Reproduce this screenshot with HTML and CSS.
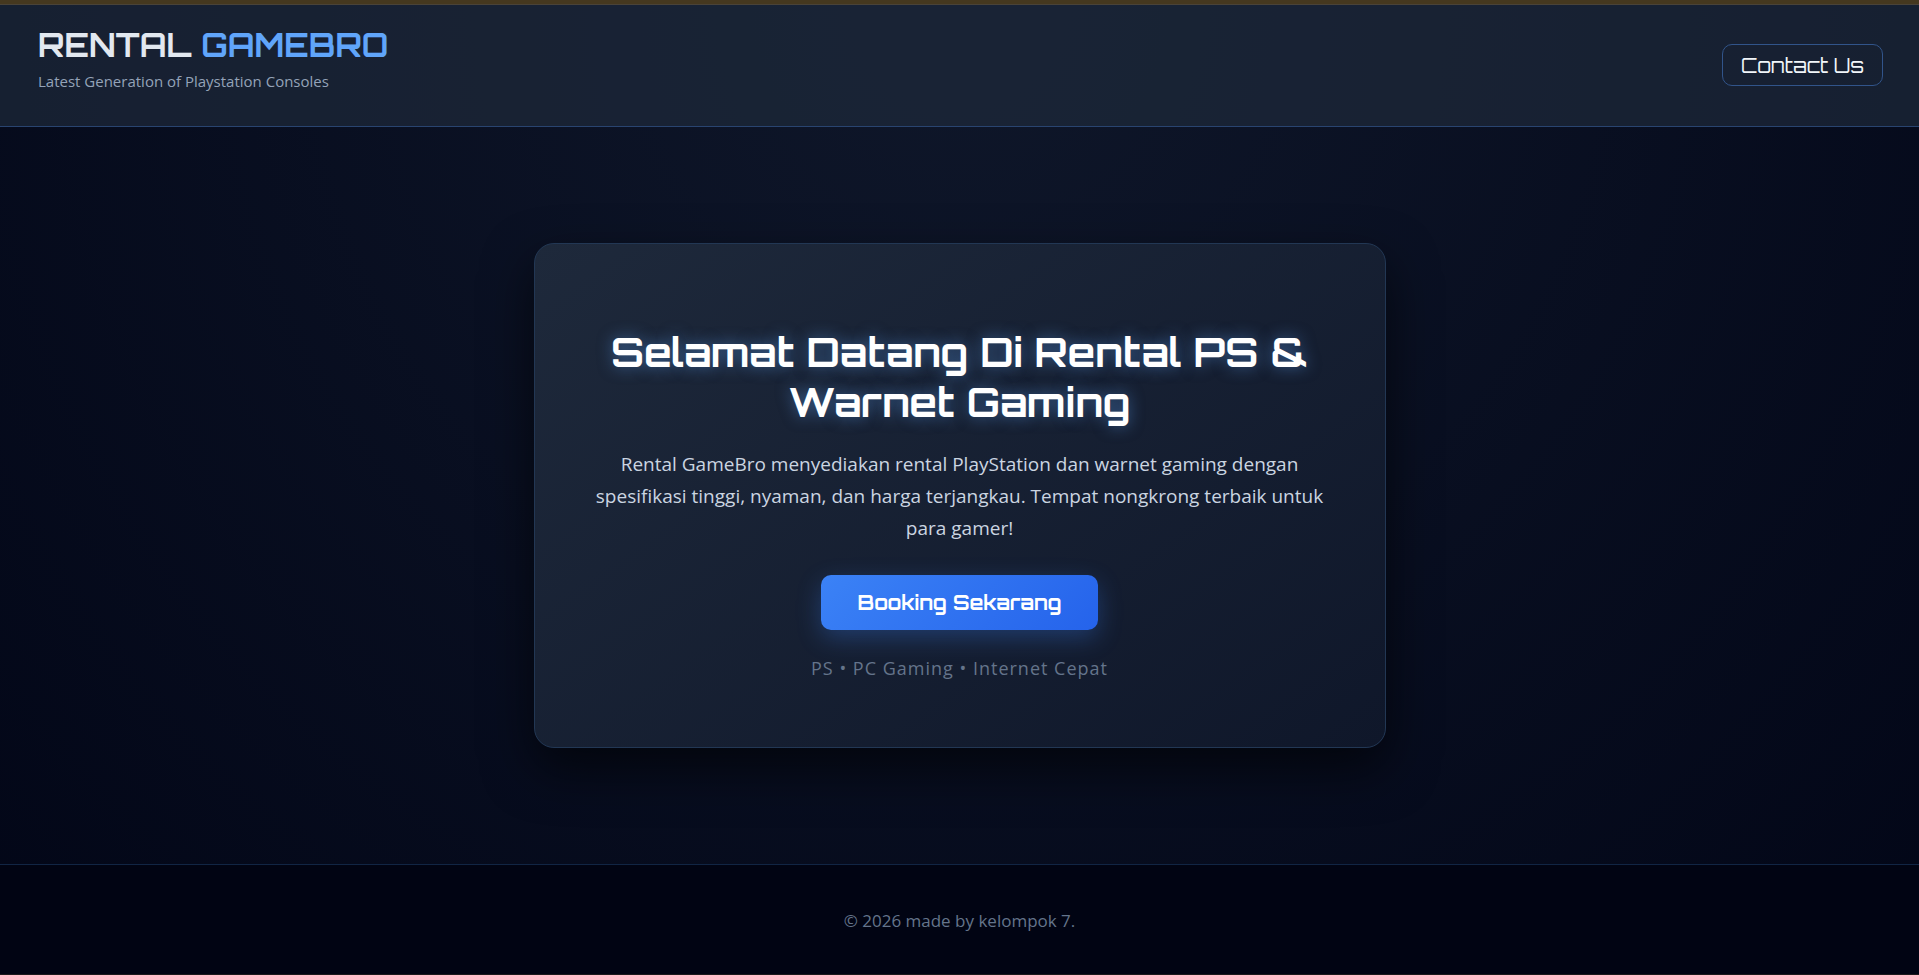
FILE: index.html
```html
<!DOCTYPE html>
<html lang="id">
<head>
<meta charset="utf-8">
<title>Rental GameBro</title>
<meta name="viewport" content="width=device-width, initial-scale=1">
<link rel="stylesheet" href="styles.css">
</head>
<body class="page">
<header class="header">
  <div class="brand">
    <h1 class="brand-name">RENTAL <span class="brand-accent">GAMEBRO</span></h1>
    <p class="brand-tagline">Latest Generation of Playstation Consoles</p>
  </div>
  <nav>
    <a class="contact-link" href="#contact">Contact Us</a>
  </nav>
</header>
<main class="main">
  <section class="hero">
    <h2 class="hero-title">Selamat Datang Di Rental PS &amp; Warnet Gaming</h2>
    <p class="hero-text">Rental GameBro menyediakan rental PlayStation dan warnet gaming dengan spesifikasi tinggi, nyaman, dan harga terjangkau. Tempat nongkrong terbaik untuk para gamer!</p>
    <button class="booking-button" type="button">Booking Sekarang</button>
    <p class="hero-note">PS • PC Gaming • Internet Cepat</p>
  </section>
</main>
<footer class="footer" id="contact">
  <p class="footer-text">© 2026 made by kelompok 7.</p>
</footer>
</body>
</html>
```

FILE: styles.css
```css
* {
  box-sizing: border-box;
  margin: 0;
  padding: 0;
}

.page {
  display: flex;
  flex-direction: column;
  min-height: 100vh;
  background: radial-gradient(circle at top, #0f172a, #020617) no-repeat #020617;
  color: #e2e8f0;
  font-family: "Segoe UI", "Open Sans", sans-serif;
  border-top: 4px solid #45381f;
  border-bottom: 1px solid #1c1a1c;
}

.header {
  display: flex;
  justify-content: space-between;
  align-items: center;
  padding: 18px 36px 32px 38px;
  min-height: 123px;
  background: rgba(30, 41, 59, 0.7);
  border-top: 1px solid #4a4338;
  border-bottom: 1px solid #294470;
}

.brand-name,
.contact-link,
.hero-title,
.booking-button {
  font-family: "Orbitron", "DejaVu Sans", sans-serif;
}

.brand-name {
  font-size: 32px;
  line-height: 40px;
  font-weight: 700;
}

.brand-accent {
  color: #60a5fa;
}

.brand-tagline {
  margin-top: 4px;
  font-size: 15px;
  line-height: 24px;
  color: #94a3b8;
}

.contact-link {
  display: block;
  margin-top: 12px;
  padding: 9px 18px 7px;
  border: 1px solid #31548a;
  border-radius: 10px;
  color: #f1f5f9;
  font-size: 20px;
  line-height: 24px;
  text-decoration: none;
}

.main {
  flex: 1;
  display: flex;
  justify-content: center;
  align-items: center;
  padding: 60px 20px;
}

.hero {
  width: 100%;
  max-width: 852px;
  padding: 83px 60px 65px;
  text-align: center;
  background: linear-gradient(145deg, #1e293b, #0f172a);
  border: 1px solid #223754;
  border-radius: 20px;
  box-shadow: 0 20px 50px rgba(0, 0, 0, 0.6);
}

.hero-title {
  margin-bottom: 21px;
  color: #ffffff;
  font-size: 40px;
  line-height: 50px;
  font-weight: 700;
  text-shadow: 0 0 15px rgba(96, 165, 250, 0.5);
}

.hero-text {
  margin-bottom: 31px;
  color: #cbd5e1;
  font-size: 19px;
  line-height: 32px;
}

.booking-button {
  padding: 15px 37px;
  border: 0;
  border-radius: 10px;
  background: linear-gradient(135deg, #3b82f6, #2563eb);
  box-shadow: 0 8px 25px rgba(59, 130, 246, 0.3);
  color: #ffffff;
  font-size: 20px;
  line-height: 25px;
  font-weight: 700;
}

.hero-note {
  margin-top: 24px;
  color: #64748b;
  font-size: 18px;
  line-height: 28px;
  letter-spacing: 1px;
}

.footer {
  padding: 41px 20px 39px;
  background: #010413;
  border-top: 1px solid #112544;
  text-align: center;
}

.footer-text {
  color: #64748b;
  font-size: 17px;
  line-height: 29px;
}
```
